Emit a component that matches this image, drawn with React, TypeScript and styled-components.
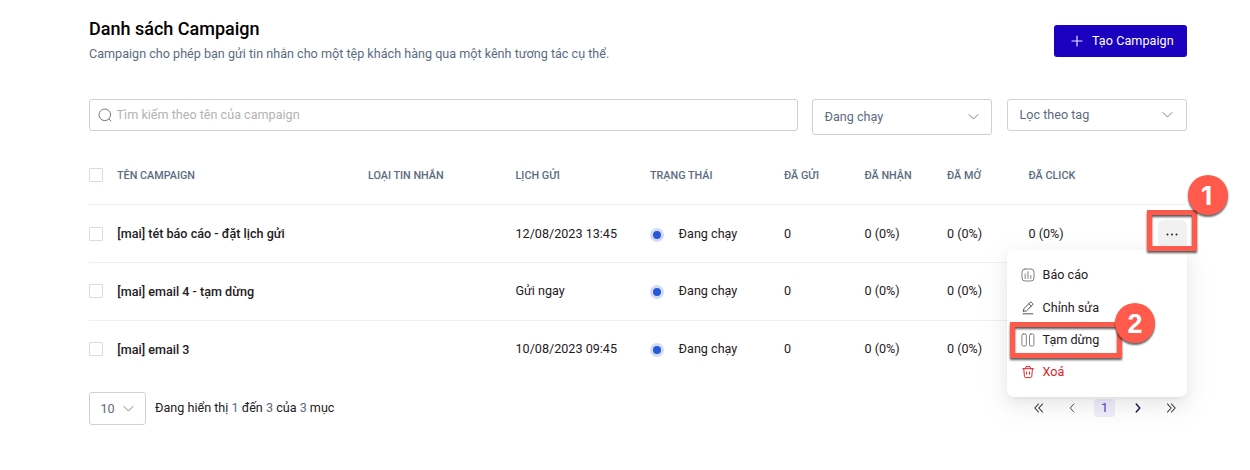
import React from "react";
import styled, { createGlobalStyle } from "styled-components";

const Global = createGlobalStyle`
  * { box-sizing: border-box; }
  body {
    margin: 0;
    background: #fff;
    color: #1f2023;
    font-family: Roboto, "Liberation Sans", sans-serif;
    font-size: 12.6px;
    line-height: 18px;
  }
`;

const Page = styled.main`
  position: relative;
  width: 1250px;
  height: 470px;
  overflow: hidden;
  padding: 19px 63px 0 89px;
`;

const Header = styled.header`
  display: flex;
  justify-content: space-between;
  height: 80px;
`;

const Title = styled.h1`
  margin: 0;
  font-size: 18px;
  font-weight: 500;
  line-height: 20px;
  color: #000;
`;

const Subtitle = styled.p`
  margin: 6px 0 0;
  color: #5b6b82;
`;

const CreateButton = styled.button`
  display: flex;
  align-items: center;
  gap: 9px;
  width: 133px;
  height: 32px;
  margin-top: 6px;
  padding: 0 0 0 17px;
  border: 0;
  border-radius: 3px;
  background: #1b00c0;
  color: #fff;
  font: inherit;
  letter-spacing: 0.05px;
`;

const Filters = styled.div`
  display: flex;
  align-items: flex-start;
  height: 47px;
`;

const SearchBox = styled.div`
  display: flex;
  align-items: center;
  gap: 4.6px;
  width: 709px;
  height: 32px;
  margin-right: 14px;
  padding-left: 8px;
  border: 1px solid #cfd0d6;
  border-radius: 3px;
  color: #b3b3b3;
`;

const SelectBox = styled.div<{ $width: number; $height: number; $left?: number; $right?: number }>`
  display: flex;
  align-items: center;
  justify-content: space-between;
  width: ${(p) => p.$width}px;
  height: ${(p) => p.$height}px;
  padding: 0 ${(p) => p.$right ?? 12}px 0 ${(p) => p.$left ?? 11.5}px;
  border: 1px solid #cfd0d9;
  border-radius: 3px;
  color: #5b6b82;
  & + & { margin-left: 15px; }
`;

const Row = styled.div<{ $head?: boolean; $last?: boolean; $lift?: boolean }>`
  display: grid;
  grid-template-columns: 28px 251px 147.5px 134.5px 134px 80.5px 82.5px 81.5px 1fr;
  align-items: center;
  height: ${(p) => (p.$head ? 59 : 58)}px;
  padding-bottom: ${(p) => (p.$lift ? 2 : 0)}px;
  border-bottom: 1px solid ${(p) => (p.$last ? "transparent" : "#f0f0f1")};
  ${(p) => p.$head && `color: #5b6b82; font-size: 10.8px; font-weight: 500;`}
`;

const HeadCell = styled.span`
  padding-top: 2px;
`;

const Check = styled.span`
  width: 14px;
  height: 14px;
  border: 1px solid #d5dcec;
  border-radius: 1px;
`;

const Name = styled.span<{ $drop?: boolean }>`
  font-weight: 500;
  padding: ${(p) => (p.$drop ? 2 : 0)}px 0 0 0.3px;
`;

const Status = styled.span`
  display: flex;
  align-items: center;
  gap: 14.6px;
`;

const Dot = styled.i`
  width: 14px;
  height: 14px;
  margin-top: 2px;
  border: 3px solid #d3dcf7;
  border-radius: 50%;
  background: #2a56d8;
`;

const LastCell = styled.span`
  display: flex;
  align-items: center;
  justify-content: space-between;
`;

const MoreButton = styled.span`
  display: flex;
  align-items: center;
  justify-content: center;
  width: 29px;
  height: 28px;
  padding-right: 1px;
  border-radius: 6px;
  background: #f1f1f2;
`;

const Footer = styled.footer`
  display: flex;
  align-items: center;
  height: 33px;
  margin-top: 13px;
`;

const Summary = styled.span`
  margin: 0 0 2px 9px;
  flex: 1;
  b { font-weight: 400; color: #5b6b82; }
`;

const Pager = styled.nav`
  display: flex;
  align-items: center;
  gap: 12px;
  margin: 0 6px 1px 0;
`;

const PageButton = styled.span<{ $active?: boolean }>`
  display: flex;
  align-items: center;
  justify-content: center;
  width: 21px;
  height: 18px;
  border-radius: 3px;
  color: ${(p) => (p.$active ? "#5340c8" : "#1f2023")};
  background: ${(p) => (p.$active ? "#f0edfc" : "transparent")};
`;

const Menu = styled.div`
  position: absolute;
  left: 1007px;
  top: 250px;
  width: 180px;
  height: 147px;
  padding: 9px 14px;
  border-radius: 7px;
  background: #fff;
  box-shadow: 0 3px 6px -4px rgba(0, 0, 0, 0.12), 0 6px 16px rgba(0, 0, 0, 0.06),
    0 9px 28px 8px rgba(0, 0, 0, 0.04);
`;

const MenuItem = styled.div<{ $danger?: boolean }>`
  display: flex;
  align-items: center;
  gap: 7.6px;
  height: 32.4px;
  color: ${(p) => (p.$danger ? "#e02329" : "#1f2023")};
`;

const Highlight = styled.div<{ $x: number; $y: number; $w: number; $h: number }>`
  position: absolute;
  left: ${(p) => p.$x}px;
  top: ${(p) => p.$y}px;
  width: ${(p) => p.$w}px;
  height: ${(p) => p.$h}px;
  border: 5px solid #ff5a4b;
  filter: drop-shadow(0 2px 1px rgba(0, 0, 0, 0.65));
`;

const Marker = styled.div<{ $x: number; $y: number }>`
  position: absolute;
  left: ${(p) => p.$x}px;
  top: ${(p) => p.$y}px;
  width: 40px;
  height: 40px;
  padding-top: 1px;
  border-radius: 50%;
  background: #ff5a4b;
  color: #fff;
  font: 700 27px/40px "Liberation Sans", sans-serif;
  text-align: center;
  box-shadow: 0 2px 2px rgba(0, 0, 0, 0.6);
`;

const MarkerOne = styled(Marker)`
  padding-right: 3px;
  font: 700 26px/40px Inter, sans-serif;
`;

const Icon = ({
  size = 14,
  color = "#55565c",
  width = 1,
  children,
}: {
  size?: number;
  color?: string;
  width?: number;
  children: React.ReactNode;
}) => (
  <svg
    width={size}
    height={size}
    viewBox={`0 0 ${size} ${size}`}
    fill="none"
    stroke={color}
    strokeWidth={width}
    strokeLinecap="round"
    strokeLinejoin="round"
  >
    {children}
  </svg>
);

const Chevron = () => (
  <Icon size={12} color="#808187">
    <path d="M2 3.5 6.5 8 11 3.5" />
  </Icon>
);

const campaigns = [
  { name: "[mai] tét báo cáo - đặt lịch gửi", date: "12/08/2023 13:45", clicks: "0 (0%)" },
  { name: "[mai] email 4 - tạm dừng", date: "Gửi ngay" },
  { name: "[mai] email 3", date: "10/08/2023 09:45" },
];

const headings = [
  "TÊN CAMPAIGN",
  "LOẠI TIN NHẮN",
  "LỊCH GỬI",
  "TRẠNG THÁI",
  "ĐÃ GỬI",
  "ĐÃ NHẬN",
  "ĐÃ MỞ",
  "ĐÃ CLICK",
];

export default function App() {
  return (
    <Page>
      <Global />
      <Header>
        <div>
          <Title>Danh sách Campaign</Title>
          <Subtitle>
            Campaign cho phép bạn gửi tin nhắn cho một tệp khách hàng qua một kênh tương tác cụ thể.
          </Subtitle>
        </div>
        <CreateButton>
          <Icon size={12} color="#e4e0fb" width={1.2}>
            <path d="M6 1v10M1 6h10" />
          </Icon>
          Tạo Campaign
        </CreateButton>
      </Header>

      <Filters>
        <SearchBox>
          <Icon color="#77787e">
            <circle cx="6.8" cy="6.8" r="5.8" />
            <path d="m11.2 11.2 1.8 1.8" />
          </Icon>
          Tìm kiếm theo tên của campaign
        </SearchBox>
        <SelectBox $width={180} $height={36}>
          Đang chạy
          <Chevron />
        </SelectBox>
        <SelectBox $width={180} $height={32} $right={13}>
          Lọc theo tag
          <Chevron />
        </SelectBox>
      </Filters>

      <Row $head>
        <Check />
        {headings.map((h) => (
          <HeadCell key={h}>{h}</HeadCell>
        ))}
      </Row>
      {campaigns.map((c, i) => (
        <Row key={c.name} $lift={i > 0} $last={i === campaigns.length - 1}>
          <Check />
          <Name $drop={i > 0}>{c.name}</Name>
          <span />
          <span>{c.date}</span>
          <Status>
            <Dot />
            Đang chạy
          </Status>
          <span>0</span>
          <span>0 (0%)</span>
          <span>0 (0%)</span>
          {c.clicks && (
            <LastCell>
              {c.clicks}
              <MoreButton>
                <Icon size={12} color="#1f2023" width={1.9}>
                  <path d="M1.5 6.5h.01M6 6.5h.01M10.5 6.5h.01" />
                </Icon>
              </MoreButton>
            </LastCell>
          )}
        </Row>
      ))}

      <Menu>
        <MenuItem>
          <Icon color="#808186">
            <rect x="1" y="1" width="12" height="12" rx="3" />
            <path d="M4.2 6v4.5M7 3.8v6.7M9.8 7.5v3" />
          </Icon>
          Báo cáo
        </MenuItem>
        <MenuItem>
          <Icon>
            <path d="M2.4 10.2 2.9 7.6 9 1.5a1.2 1.2 0 0 1 1.7 0l.8.8a1.2 1.2 0 0 1 0 1.7L5.3 10l-2.9.2ZM7.9 2.8l2.4 2.4M2 12.8h9.8" />
          </Icon>
          Chỉnh sửa
        </MenuItem>
        <MenuItem>
          <Icon color="#808186">
            <rect x="0.9" y="1" width="4.4" height="12" rx="1.3" />
            <rect x="8.5" y="1" width="4.4" height="12" rx="1.3" />
          </Icon>
          Tạm dừng
        </MenuItem>
        <MenuItem $danger>
          <Icon color="#e02329">
            <path d="M1.8 3.7h10.6M4.5 3.5 5 1.6h4l.5 1.9M2.8 3.9l.6 7.4a1.4 1.4 0 0 0 1.4 1.3h4.6a1.4 1.4 0 0 0 1.4-1.3l.6-7.4M5.6 7v2.2M8.5 7v2.2" />
          </Icon>
          Xoá
        </MenuItem>
      </Menu>

      <Footer>
        <SelectBox $width={57} $height={33} $left={10.5} $right={11}>
          10
          <Chevron />
        </SelectBox>
        <Summary>
          Đang hiển thị <b>1</b> đến <b>3</b> của <b>3</b> mục
        </Summary>
        <Pager>
          <PageButton>
            <Icon size={12} color="#2c2d33" width={1.1}>
              <path d="M5.5 2 1.8 6l3.7 4M9.5 2 5.8 6l3.7 4" />
            </Icon>
          </PageButton>
          <PageButton>
            <Icon size={12}>
              <path d="M7.8 2 4.2 6l3.6 4" />
            </Icon>
          </PageButton>
          <PageButton $active>1</PageButton>
          <PageButton>
            <Icon size={12} color="#11123a" width={1.3}>
              <path d="M4.2 2 7.8 6l-3.6 4" />
            </Icon>
          </PageButton>
          <PageButton>
            <Icon size={12} color="#2c2d33" width={1.1}>
              <path d="M2.5 2 6.2 6l-3.7 4M6.5 2l3.7 4-3.7 4" />
            </Icon>
          </PageButton>
        </Pager>
      </Footer>

      <Highlight $x={1147} $y={210} $w={50} $h={41} />
      <Highlight $x={1010} $y={322} $w={112} $h={36} />
      <MarkerOne $x={1188} $y={175}>1</MarkerOne>
      <Marker $x={1115} $y={303}>2</Marker>
    </Page>
  );
}
